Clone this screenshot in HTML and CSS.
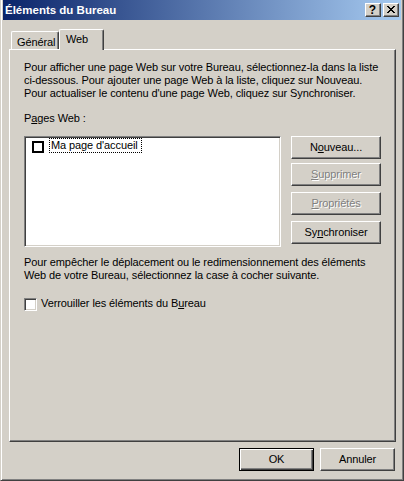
FILE: index.html
```html
<!DOCTYPE html>
<html lang="fr">
<head>
<meta charset="utf-8">
<title>Éléments du Bureau</title>
<link rel="stylesheet" href="styles.css">
</head>
<body>
<div class="window">
  <div class="titlebar">
    <span class="title">Éléments du Bureau</span>
    <div class="tbtns">
      <span class="tbtn help">?</span>
      <span class="tbtn close"><svg width="8" height="7" viewBox="0 0 8 7"><path d="M0 0h2v1H0zM6 0h2v1H6zM1 1h2v1H1zM5 1h2v1H5zM2 2h4v1H2zM3 3h2v1H3zM2 4h4v1H2zM1 5h2v1H1zM5 5h2v1H5zM0 6h2v1H0zM6 6h2v1H6z" fill="#000"/></svg></span>
    </div>
  </div>
  <div class="tabs">
    <div class="tab">Général</div>
    <div class="tab active">Web</div>
  </div>
  <div class="panel">
    <p class="para">Pour afficher une page Web sur votre Bureau, sélectionnez-la dans la liste<br>ci-dessous. Pour ajouter une page Web à la liste, cliquez sur Nouveau.<br>Pour actualiser le contenu d'une page Web, cliquez sur Synchroniser.</p>
    <div class="label">P<u>a</u>ges Web :</div>
    <div class="listrow">
      <div class="listbox">
        <div class="item"><span class="lcheck"></span><span class="focus">Ma page d'accueil</span></div>
      </div>
      <div class="btncol">
        <div class="btn">N<u>o</u>uveau...</div>
        <div class="btn disabled gap4"><u>S</u>upprimer</div>
        <div class="btn disabled gap6"><u>P</u>ropriétés</div>
        <div class="btn gap6">Sy<u>n</u>chroniser</div>
      </div>
    </div>
    <p class="para para2">Pour empêcher le déplacement ou le redimensionnement des éléments<br>Web de votre Bureau, sélectionnez la case à cocher suivante.</p>
    <div class="check"><span class="cbox"></span><span>Verrouiller les éléments du B<u>u</u>reau</span></div>
  </div>
  <div class="footer">
    <div class="btn wide default">OK</div>
    <div class="btn wide">Annuler</div>
  </div>
</div>
</body>
</html>
```
FILE: styles.css
```css
* { box-sizing: border-box; }
html, body { margin: 0; padding: 0; }
body {
  width: 404px;
  height: 481px;
  overflow: hidden;
  background: #D4D0C8;
  color: #000;
  font-family: "Liberation Sans", Arial, sans-serif;
  font-size: 11px;
  line-height: 13px;
  letter-spacing: -0.1px;
}
.window {
  width: 404px;
  height: 481px;
  background: #D4D0C8;
  border: 1px solid;
  border-top: 0;
  border-color: #D4D0C8 #404040 #404040 #D4D0C8;
  box-shadow: inset 1px 0 #fff, inset -1px -1px #808080;
  padding: 0 2px 2px 2px;
  display: flex;
  flex-direction: column;
}
.titlebar {
  height: 20px;
  flex: none;
  background: linear-gradient(to right, #0A246A, #A6CAF0);
  display: flex;
  justify-content: space-between;
  align-items: flex-start;
  padding: 0 2px 0 2px;
}
.title {
  color: #fff;
  font-weight: bold;
  font-size: 11.5px;
  line-height: 14px;
  letter-spacing: 0;
  padding-top: 3px;
}
.tbtns {
  display: flex;
  gap: 2px;
  padding-top: 3px;
}
.tbtn {
  width: 16px;
  height: 14px;
  background: #D4D0C8;
  border: 1px solid;
  border-color: #fff #404040 #404040 #fff;
  box-shadow: inset -1px -1px #808080;
  display: flex;
  align-items: center;
  justify-content: center;
}
.help {
  font-weight: bold;
  font-size: 12px;
  line-height: 12px;
  letter-spacing: 0;
  padding-right: 1px;
}
.close svg { display: block; margin-right: 1px; margin-bottom: 1px; }
.tabs {
  flex: none;
  height: 20px;
  margin: 9px 0 0 6px;
  display: flex;
  align-items: flex-end;
}
.tab {
  height: 18px;
  width: 48px;
  margin-left: 2px;
  padding: 4px 0 0 5px;
  border-top: 1px solid #fff;
  border-left: 1px solid #fff;
  border-right: 1px solid #404040;
  box-shadow: inset -1px 0 #808080;
  border-top-left-radius: 2px;
  border-top-right-radius: 2px;
  background: #D4D0C8;
}
.tab.active {
  height: 21px;
  width: 45px;
  margin-left: 0;
  margin-bottom: -1px;
  padding: 3px 0 0 6px;
  position: relative;
  z-index: 1;
}
.panel {
  flex: none;
  width: 387px;
  height: 393px;
  margin-left: 6px;
  border-top: 1px solid #fff;
  border-left: 1px solid #fff;
  border-right: 1px solid #404040;
  border-bottom: 1px solid #404040;
  box-shadow: inset -1px -1px #808080;
  padding: 11px 14px 0 14px;
}
.para { margin: 0; white-space: nowrap; }
.label { margin-top: 12px; }
.listrow {
  margin-top: 11px;
  display: grid;
  grid-template-columns: 257px 90px;
  column-gap: 10px;
  align-items: start;
}
.listbox {
  height: 111px;
  background: #fff;
  border: 1px solid;
  border-color: #808080 #fff #fff #808080;
  box-shadow: inset 1px 1px #404040, inset -1px -1px #D4D0C8;
  padding: 1px;
}
.item { display: flex; align-items: flex-start; }
.lcheck {
  width: 12px;
  height: 12px;
  border: 2px solid #000;
  background: #fff;
  margin: 3px 0 0 6px;
  flex: none;
}
.focus {
  margin-left: 5px;
  border: 1px dotted #000;
  padding: 0 3px 0 1px;
}
.btncol { display: flex; flex-direction: column; }
.btn {
  height: 23px;
  width: 90px;
  background: #D4D0C8;
  border: 1px solid;
  border-color: #fff #404040 #404040 #fff;
  box-shadow: inset -1px -1px #808080;
  display: flex;
  align-items: center;
  justify-content: center;
  padding-bottom: 1px;
}
.gap4 { margin-top: 4px; }
.gap6 { margin-top: 6px; }
.disabled { color: #808080; text-shadow: 1px 1px 0 #fff; }
.para2 { margin-top: 9px; }
.check {
  margin-top: 15px;
  display: flex;
  align-items: flex-start;
}
.cbox {
  width: 13px;
  height: 13px;
  margin: 1px 4px 0 0;
  flex: none;
  background: #fff;
  border: 1px solid;
  border-color: #808080 #fff #fff #808080;
  box-shadow: inset 1px 1px #404040, inset -1px -1px #D4D0C8;
}
.footer {
  flex: none;
  margin-top: 6px;
  display: flex;
  justify-content: flex-end;
  gap: 6px;
  padding-right: 6px;
}
.btn.wide { width: 75px; }
.btn.default {
  border: 1px solid #000;
  box-shadow: inset 1px 1px #fff, inset -1px -1px #404040, inset -2px -2px #808080;
}
```
